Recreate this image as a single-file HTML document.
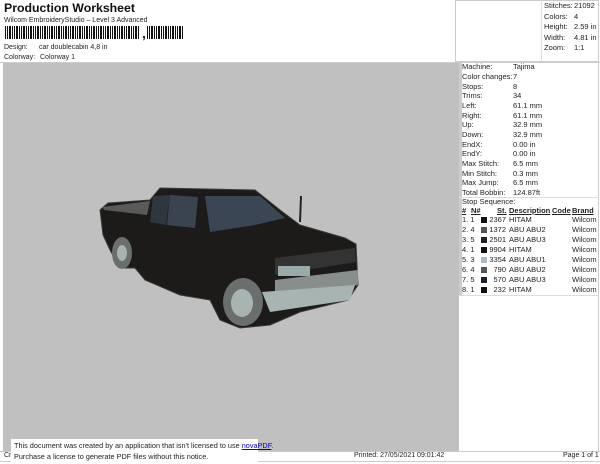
<!DOCTYPE html>
<html><head><meta charset="utf-8"><style>
*{margin:0;padding:0;box-sizing:border-box}
body{width:600px;height:464px;background:#fff;font-family:"Liberation Sans",sans-serif;font-size:7.5px;color:#222;position:relative;overflow:hidden}
.a{position:absolute;white-space:nowrap}
.bc{position:absolute;left:5px;top:26px;height:13px;background:repeating-linear-gradient(90deg,#111 0 1px,#fff 1px 2px,#111 2px 3px,#fff 3px 4px,#111 4px 6px,#fff 6px 7px)}
.r{position:absolute;height:10px;line-height:10px;font-size:7.5px;white-space:nowrap}
.sq{position:absolute;width:6px;height:6px;top:2px}
</style></head><body>
<div class="a" style="left:4px;top:1px;font-size:12.3px;font-weight:bold;color:#111">Production Worksheet</div>
<div class="a" style="left:4px;top:17px;font-size:7px">Wilcom EmbroideryStudio – Level 3 Advanced</div>
<div class="bc" style="width:135px"></div>
<div class="a" style="left:142px;top:25px;font-size:14px;font-weight:bold">,</div>
<div class="bc" style="left:147px;width:36px"></div>
<div class="a" style="left:4px;top:44px;font-size:7px">Design:</div>
<div class="a" style="left:39px;top:44px;font-size:7px">car doublecabin 4,8 in</div>
<div class="a" style="left:4px;top:54px;font-size:7px">Colorway:</div>
<div class="a" style="left:40px;top:54px;font-size:7px">Colorway 1</div>
<div class="a" style="left:0;top:62px;width:600px;height:1px;background:#ccc"></div>
<div class="a" style="left:3px;top:63px;width:456px;height:388px;background:#c0c0c0"></div>
<div class="a" style="left:455px;top:0;width:144px;height:62px;border:1px solid #ccc"></div>
<div class="a" style="left:541px;top:0;width:1px;height:62px;background:#ddd"></div>
<div class="r" style="left:544px;top:1px">Stitches:</div><div class="r" style="left:574px;top:1px">21092</div>
<div class="r" style="left:544px;top:12px">Colors:</div><div class="r" style="left:574px;top:12px">4</div>
<div class="r" style="left:544px;top:22px">Height:</div><div class="r" style="left:574px;top:22px">2.59 in</div>
<div class="r" style="left:544px;top:33px">Width:</div><div class="r" style="left:574px;top:33px">4.81 in</div>
<div class="r" style="left:544px;top:43px">Zoom:</div><div class="r" style="left:574px;top:43px">1:1</div>
<div class="a" style="left:459px;top:62px;width:140px;height:389px;border-right:1px solid #ccc"></div>
<div class="a" style="left:459px;top:62px;width:3px;height:233px;background:#ccc"></div>
<div class="r" style="left:462px;top:62px">Machine:</div><div class="r" style="left:513px;top:62px">Tajima</div>
<div class="r" style="left:462px;top:72px">Color changes:</div><div class="r" style="left:513px;top:72px">7</div>
<div class="r" style="left:462px;top:82px">Stops:</div><div class="r" style="left:513px;top:82px">8</div>
<div class="r" style="left:462px;top:91px">Trims:</div><div class="r" style="left:513px;top:91px">34</div>
<div class="r" style="left:462px;top:101px">Left:</div><div class="r" style="left:513px;top:101px">61.1 mm</div>
<div class="r" style="left:462px;top:111px">Right:</div><div class="r" style="left:513px;top:111px">61.1 mm</div>
<div class="r" style="left:462px;top:120px">Up:</div><div class="r" style="left:513px;top:120px">32.9 mm</div>
<div class="r" style="left:462px;top:130px">Down:</div><div class="r" style="left:513px;top:130px">32.9 mm</div>
<div class="r" style="left:462px;top:140px">EndX:</div><div class="r" style="left:513px;top:140px">0.00 in</div>
<div class="r" style="left:462px;top:149px">EndY:</div><div class="r" style="left:513px;top:149px">0.00 in</div>
<div class="r" style="left:462px;top:159px">Max Stitch:</div><div class="r" style="left:513px;top:159px">6.5 mm</div>
<div class="r" style="left:462px;top:169px">Min Stitch:</div><div class="r" style="left:513px;top:169px">0.3 mm</div>
<div class="r" style="left:462px;top:178px">Max Jump:</div><div class="r" style="left:513px;top:178px">6.5 mm</div>
<div class="r" style="left:462px;top:188px">Total Bobbin:</div><div class="r" style="left:513px;top:188px">124.87ft</div>
<div class="a" style="left:459px;top:197px;width:140px;height:1px;background:#ddd"></div>
<div class="r" style="left:462px;top:197px">Stop Sequence:</div>
<div class="r" style="left:462px;top:206px;font-weight:bold;text-decoration:underline">#</div>
<div class="r" style="left:471px;top:206px;font-weight:bold;text-decoration:underline">N#</div>
<div class="r" style="left:497px;top:206px;font-weight:bold;text-decoration:underline">St.</div>
<div class="r" style="left:509px;top:206px;font-weight:bold;text-decoration:underline">Description</div>
<div class="r" style="left:552px;top:206px;font-weight:bold;text-decoration:underline">Code</div>
<div class="r" style="left:572px;top:206px;font-weight:bold;text-decoration:underline">Brand</div>
<div style="position:absolute;left:0;top:215px">
<div class="r" style="left:462px;top:0">1. 1</div><span class="sq" style="left:481px;top:2px;background:#111"></span><div class="r" style="left:485px;top:0;width:21px;text-align:right">2367</div><div class="r" style="left:509px;top:0">HITAM</div><div class="r" style="left:572px;top:0">Wilcom</div>
<div class="r" style="left:462px;top:10px">2. 4</div><span class="sq" style="left:481px;top:12px;background:#555"></span><div class="r" style="left:485px;top:10px;width:21px;text-align:right">1372</div><div class="r" style="left:509px;top:10px">ABU ABU2</div><div class="r" style="left:572px;top:10px">Wilcom</div>
<div class="r" style="left:462px;top:20px">3. 5</div><span class="sq" style="left:481px;top:22px;background:#1a2230"></span><div class="r" style="left:485px;top:20px;width:21px;text-align:right">2501</div><div class="r" style="left:509px;top:20px">ABU ABU3</div><div class="r" style="left:572px;top:20px">Wilcom</div>
<div class="r" style="left:462px;top:30px">4. 1</div><span class="sq" style="left:481px;top:32px;background:#111"></span><div class="r" style="left:485px;top:30px;width:21px;text-align:right">9904</div><div class="r" style="left:509px;top:30px">HITAM</div><div class="r" style="left:572px;top:30px">Wilcom</div>
<div class="r" style="left:462px;top:40px">5. 3</div><span class="sq" style="left:481px;top:42px;background:#aab8c4"></span><div class="r" style="left:485px;top:40px;width:21px;text-align:right">3354</div><div class="r" style="left:509px;top:40px">ABU ABU1</div><div class="r" style="left:572px;top:40px">Wilcom</div>
<div class="r" style="left:462px;top:50px">6. 4</div><span class="sq" style="left:481px;top:52px;background:#555"></span><div class="r" style="left:485px;top:50px;width:21px;text-align:right">790</div><div class="r" style="left:509px;top:50px">ABU ABU2</div><div class="r" style="left:572px;top:50px">Wilcom</div>
<div class="r" style="left:462px;top:60px">7. 5</div><span class="sq" style="left:481px;top:62px;background:#1a2230"></span><div class="r" style="left:485px;top:60px;width:21px;text-align:right">570</div><div class="r" style="left:509px;top:60px">ABU ABU3</div><div class="r" style="left:572px;top:60px">Wilcom</div>
<div class="r" style="left:462px;top:70px">8. 1</div><span class="sq" style="left:481px;top:72px;background:#111"></span><div class="r" style="left:485px;top:70px;width:21px;text-align:right">232</div><div class="r" style="left:509px;top:70px">HITAM</div><div class="r" style="left:572px;top:70px">Wilcom</div>
</div>
<div class="a" style="left:459px;top:295px;width:140px;height:1px;background:#ddd"></div>
<svg class="a" style="left:0;top:0" width="600" height="464">
<polygon points="100,210 108,203 150,200 160,188 255,190 280,210 300,225 345,238 356,244 358,285 348,300 300,312 270,325 240,328 220,320 210,300 180,295 145,280 135,268 120,268 110,250 103,235" fill="#1c1b1a" stroke="#3a3a38" stroke-width="1"/>
<polygon points="103,207 150,201 147,215 104,210" fill="#5a5a58"/>
<polygon points="170,195 198,197 195,228 167,225" fill="#3a4450"/>
<polygon points="153,196 170,195 166,225 150,222" fill="#2e3640"/>
<polygon points="205,196 260,196 285,218 255,225 210,232" fill="#3a4654"/>
<polygon points="275,258 355,248 356,262 275,275" fill="#333"/>
<rect x="278" y="266" width="32" height="10" fill="#9aa"/>
<polygon points="275,280 358,270 358,285 275,296" fill="#888e8c"/>
<polygon points="262,292 355,285 350,300 270,312" fill="#a8b4b2"/>
<ellipse cx="243" cy="302" rx="20" ry="24" fill="#6a6e6c"/>
<ellipse cx="242" cy="303" rx="11" ry="14" fill="#a8b4b2"/>
<ellipse cx="122" cy="253" rx="10" ry="16" fill="#6a6e6c"/>
<ellipse cx="122" cy="253" rx="5" ry="8" fill="#a8b4b2"/>
<line x1="300" y1="222" x2="301" y2="196" stroke="#222" stroke-width="2"/>
</svg>
<div class="a" style="left:0;top:451px;width:600px;height:1px;background:#ccc"></div>
<div class="a" style="left:0;top:461px;width:600px;height:1px;background:#ccc"></div>
<div class="a" style="left:4px;top:452px;font-size:7px">Cr</div>
<div class="a" style="left:354px;top:452px;font-size:7px">Printed: 27/05/2021 09:01:42</div>
<div class="a" style="left:563px;top:452px;font-size:7px">Page 1 of 1</div>
<div class="a" style="left:11px;top:439px;width:247px;height:25px;background:#fff"></div>
<div class="a" style="left:14px;top:441px;font-size:7.3px">This document was created by an application that isn't licensed to use <span style="color:#00c;text-decoration:underline">novaPDF</span>.</div>
<div class="a" style="left:14px;top:452px;font-size:7.3px">Purchase a license to generate PDF files without this notice.</div>
</body></html>
